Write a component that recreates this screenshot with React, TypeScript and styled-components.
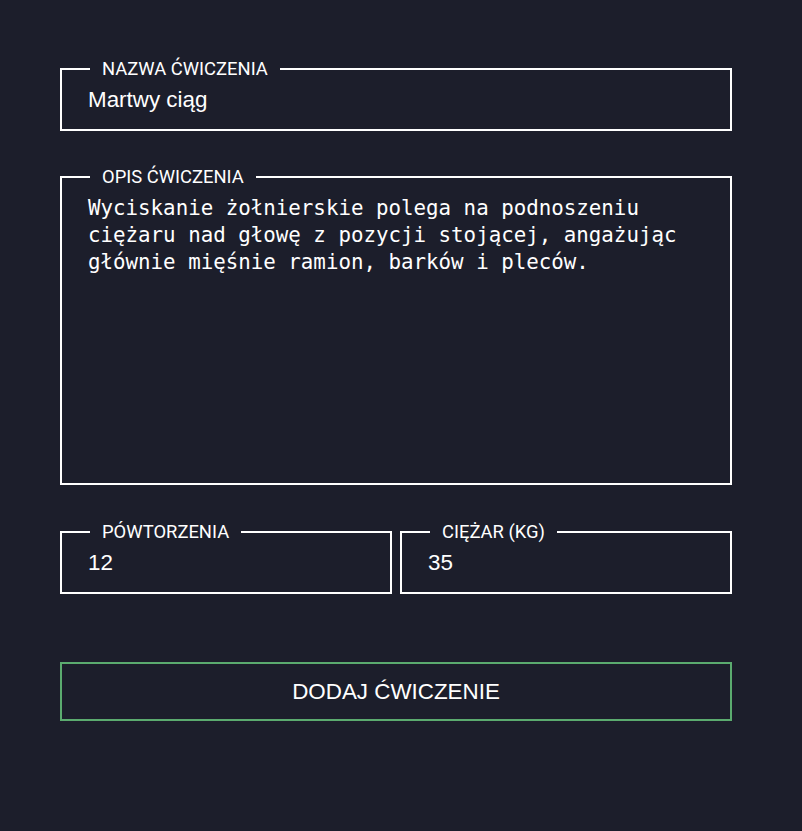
import React from "react";
import styled, { createGlobalStyle } from "styled-components";

const Global = createGlobalStyle`
  html, body { margin: 0; padding: 0; background: #1c1e2b; }
  body { font-family: "Liberation Sans", Arial, sans-serif; color: #fff; }
  * { box-sizing: border-box; }
`;

const Page = styled.div`
  min-height: 831px;
  background: #1c1e2b;
  padding: 58px 0 0 60px;
`;

const Form = styled.form`
  width: 672px;
  display: flex;
  flex-direction: column;
`;

const Field = styled.fieldset<{ $mt?: number }>`
  margin: ${(p) => p.$mt ?? 0}px 0 0 0;
  padding: 0;
  min-width: 0;
  border: 2px solid #ffffff;
  display: flex;
  flex-direction: column;
`;

const Legend = styled.legend`
  margin-left: 28px;
  padding: 0 12px;
  font-family: Roboto, "Liberation Sans", sans-serif;
  font-size: 18.4px;
  line-height: 21px;
  color: #ffffff;
  text-transform: uppercase;
`;

const TextInput = styled.input`
  display: block;
  width: 100%;
  height: 50px;
  padding: 0 26px 8px;
  border: none;
  outline: none;
  background: transparent;
  color: #ffffff;
  font-family: "Liberation Sans", Arial, sans-serif;
  font-size: 22.4px;
`;

const TextArea = styled.textarea`
  display: block;
  width: 100%;
  height: 296px;
  padding: 8px 26px 0;
  border: none;
  outline: none;
  resize: none;
  background: transparent;
  color: #ffffff;
  font-family: "DejaVu Sans Mono", monospace;
  font-size: 20.8px;
  line-height: 1.3;
`;

const Row = styled.div`
  margin-top: 36px;
  display: grid;
  grid-template-columns: 332px 1fr;
  gap: 8px;
`;

const Button = styled.button`
  margin-top: 68px;
  height: 59px;
  width: 100%;
  border: 2px solid #5bab6f;
  background: transparent;
  color: #ffffff;
  font-family: "Liberation Sans", Arial, sans-serif;
  font-size: 22.4px;
  text-transform: uppercase;
  cursor: pointer;
`;

export default function App() {
  return (
    <>
      <Global />
      <Page>
        <Form onSubmit={(e) => e.preventDefault()}>
          <Field>
            <Legend>Nazwa ćwiczenia</Legend>
            <TextInput defaultValue="Martwy ciąg" />
          </Field>
          <Field $mt={35}>
            <Legend>Opis ćwiczenia</Legend>
            <TextArea defaultValue="Wyciskanie żołnierskie polega na podnoszeniu ciężaru nad głowę z pozycji stojącej, angażując głównie mięśnie ramion, barków i pleców." />
          </Field>
          <Row>
            <Field>
              <Legend>Pówtorzenia</Legend>
              <TextInput defaultValue="12" />
            </Field>
            <Field>
              <Legend>Ciężar (kg)</Legend>
              <TextInput defaultValue="35" />
            </Field>
          </Row>
          <Button type="submit">Dodaj ćwiczenie</Button>
        </Form>
      </Page>
    </>
  );
}
